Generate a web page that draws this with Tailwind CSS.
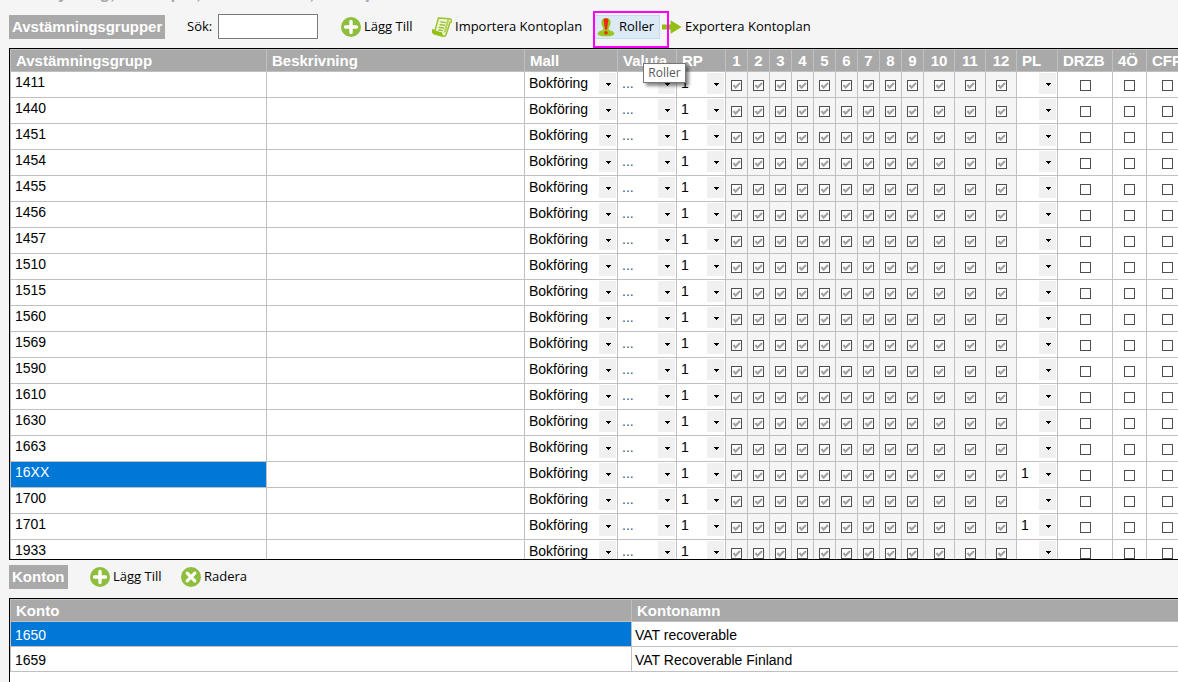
<!DOCTYPE html>
<html lang="sv">
<head>
<meta charset="utf-8">
<meta name="viewport" content="width=device-width, initial-scale=1">
<title>Avstämningsgrupper</title>
<script src="https://cdn.jsdelivr.net/npm/@tailwindcss/browser@4"></script>
</head>
<body class="flex h-screen flex-col overflow-hidden bg-[#f5f5f5] font-['Open_Sans','Noto_Sans',sans-serif] text-[13px] text-black">

<svg class="hidden" aria-hidden="true">
  <symbol id="plus" viewBox="0 0 20 20">
    <circle cx="10" cy="10" r="10" fill="#8fbe3f"/>
    <path d="M10 4.5v11M4.5 10h11" stroke="#fff" stroke-width="3.4" stroke-linecap="round"/>
  </symbol>
  <symbol id="cross" viewBox="0 0 20 20">
    <circle cx="10" cy="10" r="10" fill="#8fbe3f"/>
    <path d="M6.2 6.2l7.6 7.6M13.8 6.2l-7.6 7.6" stroke="#fff" stroke-width="3.2" stroke-linecap="round"/>
  </symbol>
  <symbol id="scroll" viewBox="0 0 20 20">
    <path d="M6.4 1L17.6 1.8C19.2 2 19.8 3.4 19.3 5L18 5.4L14.2 17.2C13.7 18.8 12.4 19.6 11 19.2L2.5 17C.8 16.4 0 14.6.6 13L3 13.6Z" fill="#eef5cf" stroke="#9cc432" stroke-width="1.5"/>
    <path d="M.4 12.8L10.2 15.4C10 17.2 11 18.6 12.4 19.2L3 17.2C.8 16.6 0 15 .4 12.8Z" fill="#93be12"/>
    <path d="M16.4 2.2L12.6 15.6" stroke="#b5d35a" stroke-width="2"/>
    <path d="M8.4 4.8l5.4.7M7.6 7.6l5.4.7M6.8 10.4l5.4.7M6.2 12.8l4.6.8" stroke="#8fb52a" stroke-width="1.2"/>
  </symbol>
  <symbol id="role" viewBox="0 0 18 20">
    <path d="M9 1C5.8 1 4.3 3 4.4 5.6C4.5 8.3 5.6 10 6.4 11.2C6.6 13 5.4 13.2 3.6 13.8C1.4 14.6.6 16 .8 17.4C3 20 15 20 17.2 17.4C17.4 16 16.6 14.6 14.4 13.8C12.6 13.2 11.4 13 11.6 11.2C12.4 10 13.5 8.3 13.6 5.6C13.7 3 12.2 1 9 1Z" fill="#9cc51e"/>
    <path d="M9 1.2C7.2 1.2 6.6 2.2 6.7 3.6L8 12.6H10L11.3 3.6C11.4 2.2 10.8 1.2 9 1.2Z" fill="#f02a10"/>
    <circle cx="9" cy="15.8" r="1.8" fill="#f02a10"/>
  </symbol>
  <symbol id="arrow" viewBox="0 0 20 20">
    <path d="M0 7.4H8.6V3.2L19.6 10L8.6 16.8V12.6H0Z" fill="#93bd12"/>
  </symbol>
</svg>

<div class="flex h-[7px] shrink-0 items-end overflow-hidden pb-[3px] pl-[41px] font-['Liberation_Sans',sans-serif] text-[17px] leading-[20px] font-bold text-[#a9a9a9]">
  <p class="whitespace-nowrap">Styrning, konto per, valuta och år, kontoplan</p>
</div>

<header class="flex h-[41px] shrink-0 items-center whitespace-nowrap pb-[2px] pl-[9px]">
  <h1 class="h-6 w-[156px] bg-[#a9a9a9] pl-[3px] font-['Liberation_Sans',sans-serif] text-[15px] leading-6 font-bold text-white">Avstämningsgrupper</h1>
  <label for="search" class="ml-[22px] w-[31px]">Sök:</label>
  <input id="search" type="text" class="h-[25px] w-[100px] border border-[#7a7a7a] bg-white px-1 outline-none">
  <button class="ml-[23px] flex w-[91px] items-center gap-[3px]"><svg class="size-5 shrink-0"><use href="#plus"/></svg>Lägg Till</button>
  <button class="flex w-[161px] items-center gap-[3px]"><svg class="size-5 shrink-0"><use href="#scroll"/></svg>Importera Kontoplan</button>
  <div class="relative flex h-6 w-[69px] items-center">
    <button class="flex h-6 w-[67px] items-center gap-1 border border-[#c3dcf2] bg-[#dceaf6] pl-[3px]"><svg class="h-5 w-[18px] shrink-0"><use href="#role"/></svg>Roller</button>
    <div class="absolute -top-1 left-0 z-10 h-[37px] w-[76px] border-2 border-[#ff00ff]"></div>
    <div role="tooltip" class="absolute top-12 left-[50px] z-20 h-5 w-[43px] border border-[#767676] bg-white text-center text-[12px] leading-[18px] text-[#575757] shadow-[3px_3px_3px_rgba(0,0,0,0.45)]">Roller</div>
  </div>
  <button class="flex items-center gap-[3px]"><svg class="size-5 shrink-0"><use href="#arrow"/></svg>Exportera Kontoplan</button>
</header>

<main class="ml-[9px] min-h-0 flex-1 overflow-hidden border-y border-l border-black bg-white">
  <div class="border-t border-l border-[#c0c0c0]">
    <table class="w-full min-w-[1177px] table-fixed border-separate border-spacing-0 font-['Liberation_Sans',sans-serif] text-[14px]">
      <colgroup>
        <col class="w-[256px]"><col><col class="w-[93px]"><col class="w-[59px]"><col class="w-[49px]">
        <col class="w-[22px]"><col class="w-[22px]"><col class="w-[22px]"><col class="w-[22px]"><col class="w-[22px]"><col class="w-[22px]"><col class="w-[22px]"><col class="w-[22px]"><col class="w-[22px]">
        <col class="w-[31px]"><col class="w-[31px]"><col class="w-[31px]">
        <col class="w-[41px]"><col class="w-[55px]"><col class="w-[34px]"><col class="w-[41px]">
      </colgroup>
      <thead><tr id="head"></tr></thead>
      <tbody id="groups"></tbody>
    </table>
  </div>
</main>

<div class="flex h-[38px] shrink-0 items-center whitespace-nowrap pb-1 pl-[9px]">
  <h2 class="h-6 w-[59px] bg-[#a9a9a9] pl-[3px] font-['Liberation_Sans',sans-serif] text-[15px] leading-6 font-bold text-white">Konton</h2>
  <button class="ml-[22px] flex w-[91px] items-center gap-[3px]"><svg class="size-5 shrink-0"><use href="#plus"/></svg>Lägg Till</button>
  <button class="flex items-center gap-[3px]"><svg class="size-5 shrink-0"><use href="#cross"/></svg>Radera</button>
</div>

<section class="ml-[9px] h-[84px] shrink-0 overflow-hidden border-t border-l border-black bg-white">
  <div class="border-t border-l border-[#c0c0c0]">
    <table class="w-full table-fixed border-separate border-spacing-0 text-left font-['Liberation_Sans',sans-serif] text-[14px]">
      <colgroup><col class="w-[621px]"><col></colgroup>
      <thead>
        <tr class="h-[22px] bg-[#a9a9a9] text-[15px] leading-[21px] text-white">
          <th class="border-r border-b border-[#c0c0c0] p-0 pl-[5px] font-bold">Konto</th>
          <th class="border-b border-[#c0c0c0] p-0 pl-[5px] font-bold">Kontonamn</th>
        </tr>
      </thead>
      <tbody>
        <tr class="h-[25px] leading-[22px]">
          <td class="border-r border-b border-[#c0c0c0] bg-[#0078d7] p-0 pt-0.5 pl-1 text-white">1650</td>
          <td class="border-b border-[#c0c0c0] p-0 pt-0.5 pl-[3px]">VAT recoverable</td>
        </tr>
        <tr class="h-[25px] leading-[22px]">
          <td class="border-r border-b border-[#c0c0c0] p-0 pt-0.5 pl-1">1659</td>
          <td class="border-b border-[#c0c0c0] p-0 pt-0.5 pl-[3px]">VAT Recoverable Finland</td>
        </tr>
      </tbody>
    </table>
  </div>
</section>

<script>
  const left = ['Avstämningsgrupp', 'Beskrivning', 'Mall', 'Valuta', 'RP'];
  const months = ['1','2','3','4','5','6','7','8','9','10','11','12'];
  const flags = ['DRZB', '4Ö', 'CFP'];
  const th = (t, c) => `<th class="h-[22px] overflow-hidden border-r border-b border-[#c0c0c0] bg-[#a9a9a9] p-0 text-[15px] leading-[21px] font-bold whitespace-nowrap text-white ${c}">${t}</th>`;
  document.getElementById('head').innerHTML =
    left.map(t => th(t, 'pl-[5px] text-left')).join('') +
    months.map(t => th(t, 'text-center')).join('') +
    th('PL', 'pl-[5px] text-left') +
    flags.map(t => th(t, 'pl-[5px] text-left')).join('');

  const drop = (label, value, color = 'text-black') => `<td class="border-r border-b border-[#c0c0c0] p-0"><div class="flex h-[25px] items-start pt-px pr-px">
    <select aria-label="${label}" class="h-5 min-w-0 flex-1 appearance-none bg-transparent pl-1 leading-5 outline-none ${color}"><option>${value}</option></select>
    <span class="flex h-[21px] w-[17px] shrink-0 items-center justify-center bg-[#f0f0f0] pt-px pl-0.5"><svg class="h-[3px] w-[5px]" viewBox="0 0 5 3" shape-rendering="crispEdges"><path d="M0 0h5v1H4v1H3v1H2V2H1V1H0z"/></svg></span></div></td>`;

  const ticked = label => `<td class="border-r border-b border-[#c0c0c0] bg-[#f5f5f5] p-0"><div class="grid h-[25px] justify-center pt-2">
    <input type="checkbox" checked disabled aria-label="${label}" class="size-[11px] appearance-none border border-[#4f4f4f] bg-white [grid-area:1/1]">
    <svg class="size-[11px] [grid-area:1/1]" viewBox="0 0 11 11"><path d="M2.4 5L4.6 7.6L9 3" fill="none" stroke="#a3a3a3" stroke-width="2.2"/></svg></div></td>`;

  const empty = label => `<td class="border-r border-b border-[#c0c0c0] p-0"><div class="grid h-[25px] justify-center pt-2">
    <input type="checkbox" aria-label="${label}" class="size-[11px] appearance-none border border-[#4f4f4f] bg-white"></div></td>`;

  const groups = ['1411','1440','1451','1454','1455','1456','1457','1510','1515','1560','1569','1590','1610','1630','1663','16XX','1700','1701','1933'];
  const pl = { '16XX': '1', '1701': '1' };
  document.getElementById('groups').innerHTML = groups.map(g => `<tr>
    <td class="border-r border-b border-[#c0c0c0] p-0 pl-1 align-top leading-5 ${g === '16XX' ? 'bg-[#0078d7] text-white' : ''}">${g}</td>
    <td class="border-r border-b border-[#c0c0c0] p-0"></td>
    ${drop('Mall ' + g, 'Bokföring')}${drop('Valuta ' + g, '...', 'text-[#3d5a78]')}${drop('RP ' + g, '1')}
    ${months.map(m => ticked(m + ' ' + g)).join('')}
    ${drop('PL ' + g, pl[g] || '')}
    ${flags.map(f => empty(f + ' ' + g)).join('')}</tr>`).join('');
</script>
</body>
</html>
